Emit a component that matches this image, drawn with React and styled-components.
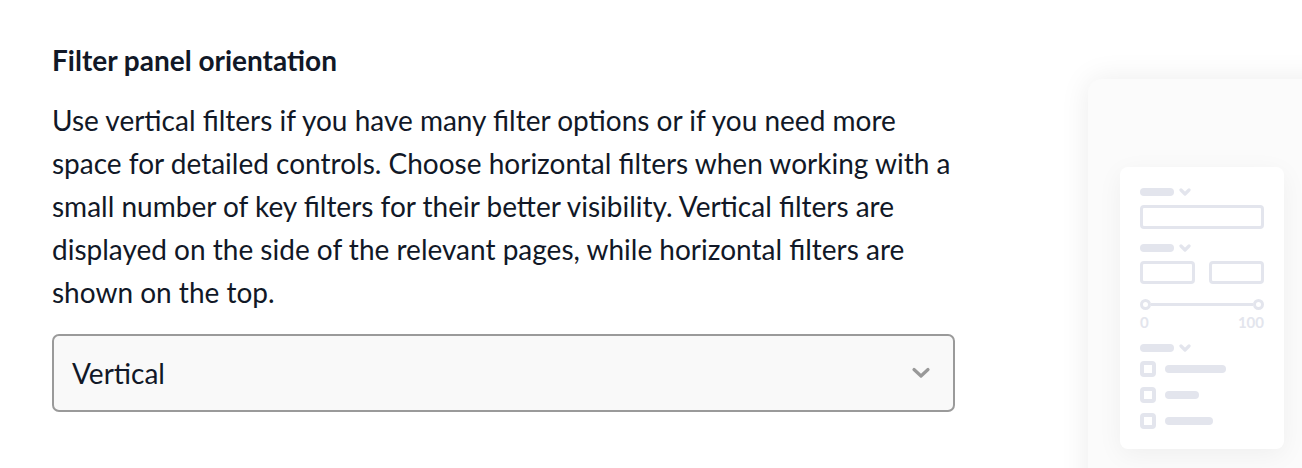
import React from "react";
import styled, { createGlobalStyle } from "styled-components";

const GlobalStyle = createGlobalStyle`
  html, body {
    margin: 0;
    padding: 0;
    background: #ffffff;
  }
  body {
    font-family: Lato, "Open Sans", sans-serif;
    color: #111827;
  }
`;

const preview = "#e3e5ed";

const App = () => {
  return (
    <Page>
      <GlobalStyle />
      <Setting>
        <Title>Filter panel orientation</Title>
        <Description>
          Use vertical filters if you have many filter options or if you need
          more space for detailed controls. Choose horizontal filters when
          working with a small number of key filters for their better
          visibility. Vertical filters are displayed on the side of the
          relevant pages, while horizontal filters are shown on the top.
        </Description>
        <Select>
          <span>Vertical</span>
          <svg width="20" height="12" viewBox="0 0 20 12">
            <polyline
              points="3,2.5 10,9 17,2.5"
              fill="none"
              stroke="#999"
              strokeWidth="3.2"
              strokeLinecap="round"
              strokeLinejoin="round"
            />
          </svg>
        </Select>
      </Setting>

      <Frame>
        <Panel>
          <Label />
          <Field />
          <Label />
          <FieldPair>
            <Field />
            <Field />
          </FieldPair>
          <Slider>
            <Knob />
            <Track />
            <Knob />
          </Slider>
          <Range>
            <span>0</span>
            <span>100</span>
          </Range>
          <Label />
          <Checks>
            <Check width={61} />
            <Check width={34} />
            <Check width={48} />
          </Checks>
        </Panel>
      </Frame>
    </Page>
  );
};

const Label = () => (
  <LabelRow>
    <LabelBar />
    <svg width="12" height="9" viewBox="0 0 12 9">
      <polyline
        points="2,2 6,6 10,2"
        fill="none"
        stroke={preview}
        strokeWidth="3.2"
        strokeLinecap="round"
        strokeLinejoin="round"
      />
    </svg>
  </LabelRow>
);

const Check = ({ width }) => (
  <CheckRow>
    <Box />
    <CheckBar style={{ width }} />
  </CheckRow>
);

const Page = styled.div`
  display: flex;
  gap: 133px;
  height: 468px;
  padding-left: 52px;
  overflow: hidden;
  box-sizing: border-box;
`;

const Setting = styled.div`
  width: 903px;
  flex-shrink: 0;
  padding-top: 43px;
`;

const Title = styled.h3`
  margin: 0 0 22px;
  font-size: 28px;
  font-weight: 700;
  line-height: 34px;
`;

const Description = styled.p`
  margin: 0 0 20px;
  font-size: 28px;
  line-height: 43px;
`;

const Select = styled.div`
  display: flex;
  align-items: center;
  justify-content: space-between;
  height: 78px;
  box-sizing: border-box;
  padding: 0 22px 0 18px;
  border: 2px solid #9a9a9a;
  border-radius: 7px;
  background: #f9f9f9;
  font-size: 28px;
`;

const Frame = styled.div`
  flex-shrink: 0;
  width: 260px;
  height: 420px;
  margin-top: 79px;
  padding: 88px 0 0 32px;
  box-sizing: border-box;
  background: #fbfbfb;
  border-radius: 14px;
  box-shadow: 0 0 30px rgba(0, 0, 0, 0.08);
`;

const Panel = styled.div`
  width: 164px;
  height: 282px;
  box-sizing: border-box;
  padding: 20px 20px 0;
  display: flex;
  flex-direction: column;
  background: #ffffff;
  border-radius: 8px;
  box-shadow: 0 6px 26px rgba(0, 0, 0, 0.05);
`;

const LabelRow = styled.div`
  display: flex;
  align-items: center;
  gap: 5px;
  height: 10px;
  margin-bottom: 8px;
`;

const LabelBar = styled.div`
  width: 34px;
  height: 8px;
  border-radius: 4px;
  background: ${preview};
`;

const Field = styled.div`
  height: 24px;
  box-sizing: border-box;
  border: 3px solid ${preview};
  border-radius: 4px;
  margin-bottom: 14px;
`;

const FieldPair = styled.div`
  display: flex;
  gap: 14px;

  ${Field} {
    flex: 1;
    height: 23px;
    margin-bottom: 15px;
  }
`;

const Slider = styled.div`
  display: flex;
  align-items: center;
  height: 11px;
`;

const Knob = styled.div`
  width: 11px;
  height: 11px;
  box-sizing: border-box;
  border: 3px solid ${preview};
  border-radius: 50%;
`;

const Track = styled.div`
  flex: 1;
  height: 3px;
  background: ${preview};
`;

const Range = styled.div`
  display: flex;
  justify-content: space-between;
  margin: 4px 0 13px;
  font-size: 15px;
  font-weight: 700;
  line-height: 16px;
  color: ${preview};
`;

const Checks = styled.div`
  display: flex;
  flex-direction: column;
  gap: 10px;
`;

const CheckRow = styled.div`
  display: flex;
  align-items: center;
  gap: 9px;
`;

const Box = styled.div`
  width: 16px;
  height: 16px;
  box-sizing: border-box;
  border: 4px solid ${preview};
  border-radius: 4px;
`;

const CheckBar = styled.div`
  height: 8px;
  border-radius: 4px;
  background: ${preview};
`;

export default App;
